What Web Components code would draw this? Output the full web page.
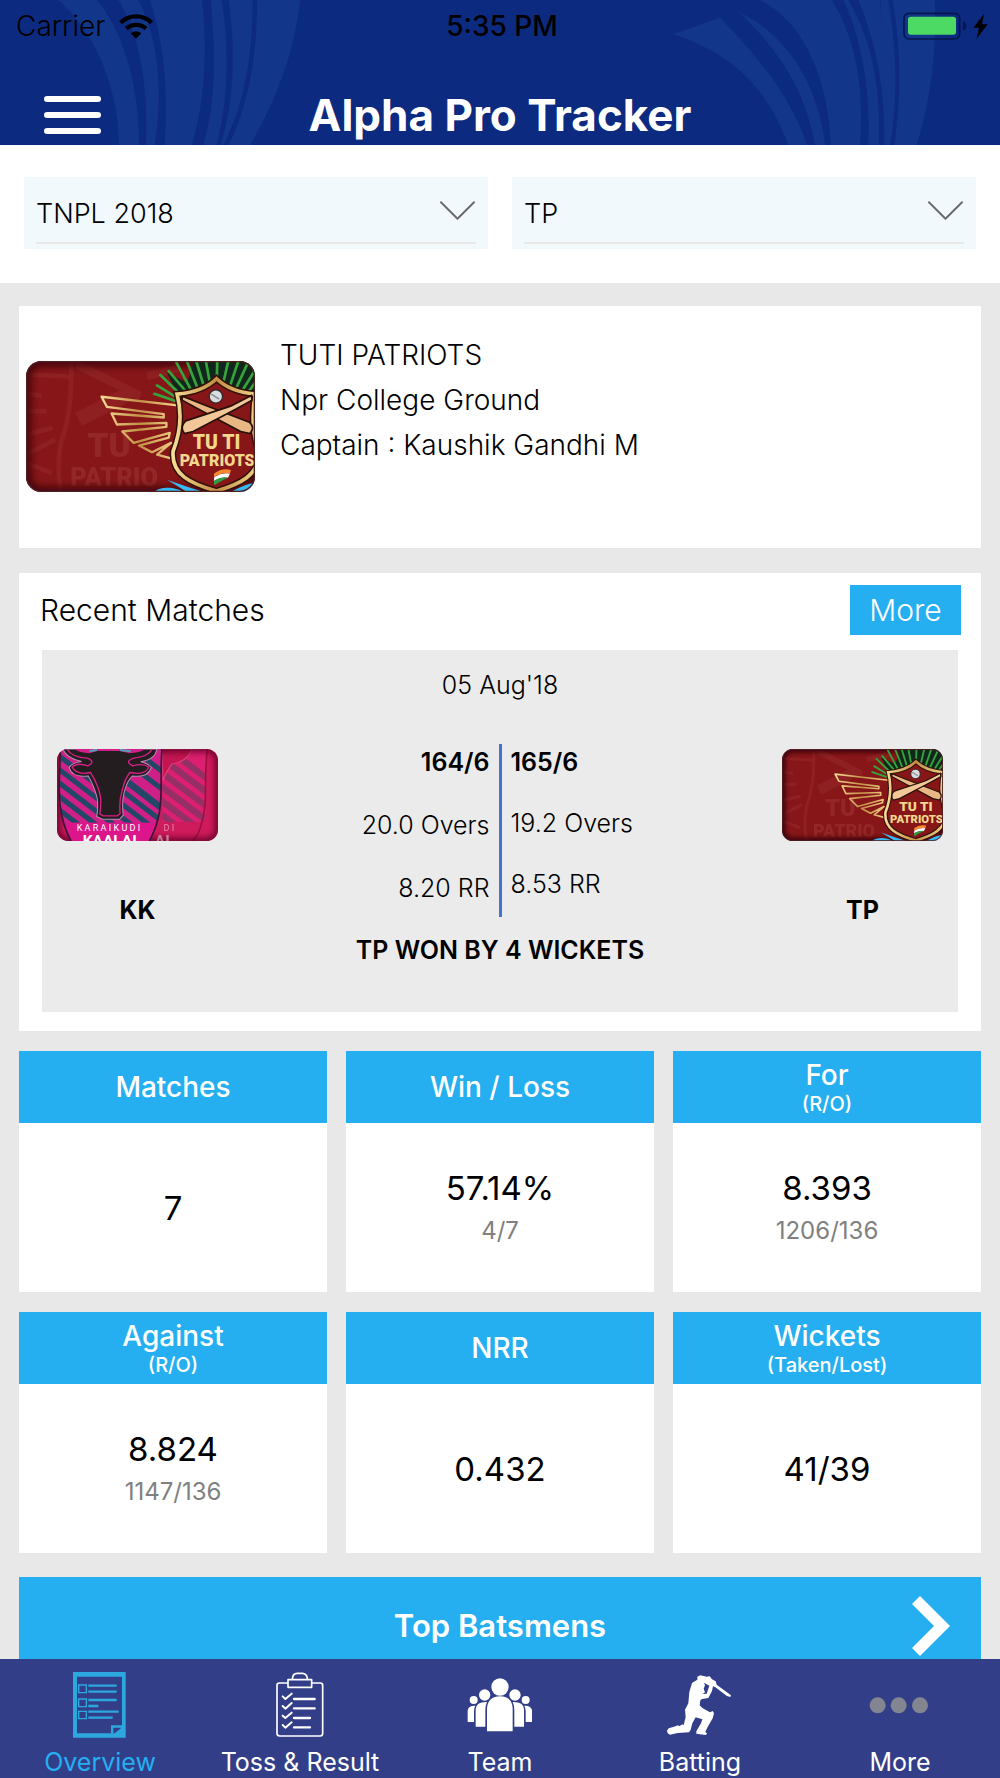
<!DOCTYPE html>
<html lang="en">
<head>
<meta charset="utf-8">
<meta name="viewport" content="width=device-width, initial-scale=1">
<title>Alpha Pro Tracker</title>
<style>
  :root {
    --sky: #25aff0;
    --navy: #0c2a80;
    --page: #e8e8e8;
    --gutter: 19px;
  }
  body {
    margin: 0;
    font-family: Inter, "Open Sans", sans-serif;
    color: #000;
    background: var(--page);
  }
</style>
</head>
<body>
<app-shell>
  <app-header slot="header" heading="Alpha Pro Tracker"></app-header>
  <filter-bar>
    <filter-select label="Tournament" value="TNPL 2018"></filter-select>
    <filter-select label="Team" value="TP"></filter-select>
  </filter-bar>
  <card-stack>
    <team-card>
      <team-logo team="tp" slot="logo"></team-logo>
      <span>TUTI PATRIOTS</span>
      <span>Npr College Ground</span>
      <span>Captain : Kaushik Gandhi M</span>
    </team-card>
    <recent-matches></recent-matches>
    <stat-grid>
      <stat-tile heading="Matches" value="7"></stat-tile>
      <stat-tile heading="Win / Loss" value="57.14%" detail="4/7"></stat-tile>
      <stat-tile heading="For" unit="(R/O)" value="8.393" detail="1206/136"></stat-tile>
      <stat-tile heading="Against" unit="(R/O)" value="8.824" detail="1147/136"></stat-tile>
      <stat-tile heading="NRR" value="0.432"></stat-tile>
      <stat-tile heading="Wickets" unit="(Taken/Lost)" value="41/39"></stat-tile>
    </stat-grid>
    <section-link>Top Batsmens</section-link>
  </card-stack>
  <tab-bar slot="footer">
    <tab-item icon="overview" active>Overview</tab-item>
    <tab-item icon="toss">Toss &amp; Result</tab-item>
    <tab-item icon="team">Team</tab-item>
    <tab-item icon="batting">Batting</tab-item>
    <tab-item icon="more">More</tab-item>
  </tab-bar>
</app-shell>

<script>
const define = (name, render) => customElements.define(name, class extends HTMLElement {
  connectedCallback() {
    if (this.shadowRoot) return;
    this.attachShadow({ mode: 'open' }).innerHTML = render(this);
  }
});

define('app-shell', () => `
  <style>
    :host { display: flex; flex-direction: column; height: 100vh; }
    main { flex: 1; min-height: 0; overflow-y: auto; scrollbar-width: none; }
  </style>
  <slot name="header"></slot>
  <main><slot></slot></main>
  <slot name="footer"></slot>`);

/* Header: status row, navigation row and the feather artwork behind both */
define('app-header', el => `
  <style>
    :host { display: block; position: relative; background: var(--navy); overflow: hidden; }
    .art { position: absolute; inset: 0; width: 100%; height: 100%; }
    .status, nav { position: relative; display: grid; grid-template-columns: 1fr auto 1fr; align-items: center; }
    .status { padding: 0 12px 0 16px; line-height: 52px; font-size: 28px; }
    .status div { display: flex; align-items: center; gap: 14px; }
    .status span { font-weight: 300; }
    .status strong { font-weight: 500; }
    .status .right { justify-content: flex-end; }
    nav { padding: 33px 44px 0; }
    h1 { margin: 0; font-size: 44px; line-height: 60px; font-weight: 700; color: #fff; }
    button { justify-self: start; display: grid; gap: 10px; width: 57px; padding: 0; border: 0; background: none; }
    button i { height: 6px; border-radius: 3px; background: #fff; }
  </style>
  <svg class="art" viewBox="0 0 3000 435" preserveAspectRatio="xMidYMid slice" fill="#12378a" aria-hidden="true">
    <path d="M175 0C260 70 355 230 357 435H417C418 270 375 100 290 0Z"/>
    <path d="M355 0C420 100 445 260 438 435H464C490 280 475 110 415 0Z"/>
    <path d="M450 0C490 120 506 270 494 435H575C620 290 620 130 606 0Z"/>
    <path d="M632 0C646 150 650 300 610 435H650C685 300 688 150 665 0Z"/>
    <path d="M686 0C707 150 704 300 662 435H670C740 300 757 150 758 0Z"/>
    <path d="M772 0C770 150 755 290 687 435H750C830 300 885 150 900 0Z"/>
    <g transform="translate(1500)">
      <path d="M520 103L660 53C780 175 870 290 922 435H865C800 260 695 160 520 103Z"/>
      <path d="M715 35C850 160 920 290 945 435H975C955 260 865 105 715 35Z"/>
      <path d="M780 0C920 70 985 250 993 435H1080C1093 270 1070 120 995 0Z"/>
      <path d="M1030 0C1090 130 1111 280 1105 435H1137C1142 270 1120 130 1045 0Z"/>
      <path d="M1075 0C1130 130 1157 280 1153 435H1170C1195 300 1189 140 1165 0H1142L1147 85L1140 0Z"/>
      <path d="M1178 0C1204 150 1204 300 1183 435H1250C1295 290 1309 150 1305 0Z"/>
    </g>
  </svg>
  <div class="status">
    <div><span>Carrier</span>
      <svg width="34" height="25" viewBox="362 35 102 75" aria-hidden="true">
        <g fill="none" stroke="#000" stroke-width="13"><path d="M367 61C392 36 435 36 460 61"/><path d="M384 79C400 64 427 64 443 79"/></g>
        <path d="M397 93Q413 80 429 93L413 109Z"/>
      </svg></div>
    <strong>5:35 PM</strong>
    <div class="right">
      <svg width="85" height="28" viewBox="1209 31 255 84" aria-hidden="true">
        <rect x="1212" y="35" width="167" height="77" rx="15" fill="none" stroke="#06174f" stroke-width="5"/>
        <rect x="1224" y="45" width="144" height="54" rx="8" fill="#4cd964"/>
        <path d="M1389 58Q1399 64 1399 73Q1399 82 1389 88Z" fill="#06174f"/>
        <path d="M1452 37L1420 78H1437L1430 111L1463 68H1446Z"/>
      </svg></div>
  </div>
  <nav>
    <button type="button" aria-label="Menu"><i></i><i></i><i></i></button>
    <h1>${el.getAttribute('heading')}</h1>
  </nav>`);

define('filter-bar', () => `
  <style>
    :host { display: grid; grid-template-columns: 1fr 1fr; gap: 24px; padding: 32px 24px 34px; background: #fff; }
  </style><slot></slot>`);

define('filter-select', el => `
  <style>
    :host { display: grid; padding: 0 12px 5px; background: #f1f9fd; }
    select, svg { grid-area: 1 / 1; }
    select { appearance: none; width: 100%; height: 67px; padding: 8px 48px 0 0; border: 0; border-bottom: 2px solid #e8e8e8;
      border-radius: 0; background: none; color: #000; font: 300 27px/36px Inter, sans-serif; }
    svg { justify-self: end; align-self: center; pointer-events: none; }
  </style>
  <select aria-label="${el.getAttribute('label')}"><option>${el.getAttribute('value')}</option></select>
  <svg width="37" height="22" viewBox="0 0 38 22" fill="none" stroke="#6b6b6b" stroke-width="2" stroke-linecap="round" stroke-linejoin="round" aria-hidden="true"><path d="M2 2L19 19L36 2"/></svg>`);

define('card-stack', () => `
  <style>:host { display: flex; flex-direction: column; padding: 23px var(--gutter) 0; }</style><slot></slot>`);

const tpLogo = `
<svg viewBox="78 65 685 392" role="img" aria-label="Tuti Patriots">
  <defs>
    <clipPath id="c"><rect x="78" y="65" width="685" height="392" rx="46"/></clipPath>
    <filter id="b" x="-20%" y="-20%" width="140%" height="140%"><feGaussianBlur stdDeviation="12"/></filter>
    <linearGradient id="g" x1="0" x2="1"><stop stop-color="#f6dc94"/><stop offset=".5" stop-color="#c28f46"/><stop offset="1" stop-color="#f4d58c"/></linearGradient>
  </defs>
  <g clip-path="url(#c)">
    <rect x="78" y="65" width="685" height="392" fill="#871619"/>
    <g stroke="#9b3532" stroke-width="14" fill="none" opacity=".35">
      <path d="M78 105L212 112M78 160L125 170M78 215H140M78 285L158 265M78 345L165 300M78 370L155 400"/>
      <path d="M212 65C218 170 202 260 182 310C172 370 172 410 184 457"/>
      <path d="M230 75L420 170" stroke-width="26"/>
      <path d="M235 240L390 160" stroke-width="44"/><path d="M440 110L540 85" stroke-width="24"/>
    </g>
    <g fill="#9b3532" opacity=".6" font-family="Roboto, sans-serif" font-weight="900">
      <text x="262" y="352" font-size="100">TU</text><text x="210" y="438" font-size="76">PATRIO</text>
    </g>
    <rect x="78" y="65" width="685" height="392" rx="46" fill="none" stroke="#330507" stroke-width="26" filter="url(#b)"/>
    <path d="M530 165L500 100L560 130L580 65H763V170L650 130Z" fill="#10281c"/>
    <g stroke="#37a33c" stroke-width="8" stroke-linecap="round">
      <path d="M535 188L462 163M535 178L470 138M540 165L480 107M560 160L505 95M574 156L528 70M592 148L560 68M610 140L588 68M628 130L616 66M649 115L650 66M668 130L683 66M688 140L713 66M706 148L738 78M724 155L760 98M740 162L763 130"/>
    </g>
    <g fill="none" stroke="url(#g)" stroke-width="7" stroke-linejoin="round">
      <path d="M532 198L304 172L320 202L490 224V234L334 222L350 255L498 250V262L366 276L400 310L508 280L505 294L416 318L455 338L512 310L470 345L512 356"/>
    </g>
    <path d="M462 457C480 438 530 442 548 457Z M500 420Q550 438 610 457H560Z M690 457Q740 430 763 430V457Z" fill="#37b9f2"/>
    <path d="M648 118C620 145 580 160 530 164C546 225 538 285 518 335C512 405 570 432 648 454C720 432 770 408 776 345C754 280 752 225 764 164C720 160 676 145 648 118Z" fill="#871619" stroke="#32100a" stroke-width="20"/>
    <path d="M648 118C620 145 580 160 530 164C546 225 538 285 518 335C512 405 570 432 648 454C720 432 770 408 776 345C754 280 752 225 764 164C720 160 676 145 648 118Z" fill="none" stroke="url(#g)" stroke-width="11"/>
    <g stroke="#271008" stroke-width="5">
      <path d="M546 170L610 196L746 248Q764 264 748 282L720 276L596 210L545 182Z" fill="#e9b784"/>
      <path d="M752 168L690 200L556 244Q536 262 552 282L578 276L708 208L754 182Z" fill="#f3c898"/>
    </g>
    <circle cx="646" cy="171" r="20" fill="#d9dde0" stroke="#35262a" stroke-width="4"/><path d="M632 164L656 179" stroke="#879098" stroke-width="5"/>
    <g fill="#f2d78d" font-family="Roboto, sans-serif" font-weight="900" text-anchor="middle">
      <text x="648" y="329" font-size="58">TU TI</text><text x="650" y="379" font-size="48">PATRIOTS</text>
    </g>
    <path d="M640 402Q665 384 691 391L688 402Q662 398 641 412Z" fill="#f58a2c"/><path d="M641 412Q664 398 688 402L682 414Q660 412 640 424Z" fill="#fff"/><path d="M640 424Q662 410 682 414Q660 424 641 437Z" fill="#2f9d46"/>
    <rect x="80" y="67" width="681" height="388" rx="44" fill="none" stroke="#50201f" stroke-width="4"/>
  </g>
</svg>`;

const kkLogo = `
<svg viewBox="53 57 479 274" role="img" aria-label="Karaikudi Kaalai">
  <defs>
    <clipPath id="c"><rect x="53" y="57" width="479" height="274" rx="34"/></clipPath>
    <clipPath id="s"><path d="M63 57H365C358 180 372 250 330 331H95C50 240 62 150 63 57Z"/></clipPath>
    <clipPath id="r"><path d="M366 57H500C490 160 502 230 490 275H366Z"/></clipPath>
    <filter id="b"><feGaussianBlur stdDeviation="9"/></filter>
  </defs>
  <g clip-path="url(#c)">
    <rect x="53" y="57" width="479" height="274" fill="#cf1a5c"/>
    <g clip-path="url(#r)"><rect x="360" y="57" width="150" height="220" fill="#dc1f70"/>
      <path d="M360 40L520 160M360 82L520 202M360 124L520 244M360 166L520 286M360 208L520 328M360 250L520 370" stroke="#943066" stroke-width="19"/></g>
    <path d="M366 57H455Q440 95 395 102Q380 120 368 150Z" fill="#c31551" stroke="#e4437e" stroke-width="3"/>
    <path d="M500 57C488 170 505 210 480 290Q470 320 455 331" fill="none" stroke="#a0103f" stroke-width="5"/>
    <rect x="53" y="57" width="479" height="274" rx="34" fill="none" stroke="#620025" stroke-width="18" filter="url(#b)"/>
    <g clip-path="url(#s)">
      <rect x="53" y="57" width="320" height="274" fill="#cf2088"/>
      <path d="M40 23L380 283M40 63L380 323M40 103L380 363M40 143L380 403M40 183L380 443M40 223L380 483M130 50L400 257M200 50L400 203M270 50L400 150M30 -20L380 248" stroke="#234766" stroke-width="15"/>
      <rect x="53" y="276" width="320" height="60" fill="#dc168a"/>
    </g>
    <path d="M365 57C358 180 376 240 328 331M63 57C62 150 45 240 95 331" fill="none" stroke="#3a1535" stroke-width="5"/>
    <path d="M70 57Q82 85 126 94Q98 98 89 112Q98 144 146 137Q165 170 173 205Q176 235 171 258L188 266H239L250 254Q245 215 253 185Q262 150 278 137Q322 144 334 112Q324 100 302 95Q346 88 350 57Z" fill="#231d20" stroke="#b98fb4" stroke-width="3"/>
    <path d="M82 57Q98 83 143 84Q170 95 145 107Q112 96 98 111Q112 136 153 127Q177 165 183 203Q184 235 180 250L190 256H232L241 249Q237 210 247 180Q255 145 270 127Q315 136 326 111Q310 98 278 107Q252 94 282 84Q324 80 337 57" fill="none" stroke="#d81f87" stroke-width="4"/>
    <path d="M104 57Q120 68 150 70L172 63H240L268 70Q300 68 316 57Z" fill="#cf2088"/>
    <path d="M150 63L172 60M240 60L272 64" stroke="#53a4bb" stroke-width="6"/>
    <g fill="#fff" font-family="Roboto, sans-serif" font-weight="400" text-anchor="middle">
      <text x="206" y="301" font-size="27">K A R A I K U D I</text>
      <text x="210" y="346" font-size="46" font-weight="700">KAALAI</text>
      <text x="386" y="301" font-size="27" opacity=".45">D I</text><text x="366" y="346" font-size="46" font-weight="700" opacity=".45">AI</text>
    </g>
  </g>
</svg>`;

define('team-logo', el => `
  <style>:host { display: block; } svg { display: block; width: 100%; height: auto; }</style>
  ${el.getAttribute('team') === 'tp' ? tpLogo : kkLogo}`);

define('team-card', () => `
  <style>
    :host { display: grid; grid-template-columns: 229px 1fr; gap: 25px; min-height: 242px; padding: 0 7px; box-sizing: border-box; background: #fff; align-items: center; }
    .lines { align-self: start; display: flex; flex-direction: column; padding-top: 27px; font-size: 28px; line-height: 45px; font-weight: 300; }
  </style>
  <slot name="logo"></slot>
  <div class="lines"><slot></slot></div>`);

define('recent-matches', () => `
  <style>
    :host { display: block; margin-top: 25px; padding: 12px 21px 19px; background: #fff; }
    header { display: flex; justify-content: space-between; align-items: center; margin-right: -1px; }
    h2 { margin: 0; font-size: 30px; font-weight: 300; line-height: 50px; }
    button { width: 111px; height: 50px; padding: 0; border: 0; background: var(--sky); color: #fff; font: 300 30px/50px Inter, sans-serif; }
    article { margin: 15px 2px 0; height: 362px; background: #ebebeb; font-size: 25px; font-weight: 300; text-align: center; }
    time { display: block; padding-top: 18px; line-height: 34px; }
    .teams { display: grid; grid-template-columns: 161px 1fr 161px; padding: 0 15px; margin-top: 42px; }
    .team { display: grid; align-content: start; gap: 52px; padding-top: 5px; font-weight: 700; line-height: 34px; }
    .scores { display: grid; grid-template-columns: 1fr 3px 1fr; column-gap: 9px; height: 173px; line-height: 36px; }
    .rule { background: #3f74cf; }
    dl { margin: 0; display: flex; flex-direction: column; text-align: left; gap: 25px; }
    dl.home { text-align: right; gap: 27px; }
    dd { margin: 0; }
    b { font-weight: 600; }
    .result { margin: 6px 0 0; line-height: 34px; font-weight: 600; }
  </style>
  <header><h2>Recent Matches</h2><button type="button">More</button></header>
  <article>
    <time datetime="2018-08-05">05 Aug'18</time>
    <div class="teams">
      <div class="team"><team-logo team="kk"></team-logo><span>KK</span></div>
      <div class="scores">
        <dl class="home"><dd><b>164/6</b></dd><dd>20.0 Overs</dd><dd>8.20 RR</dd></dl>
        <div class="rule"></div>
        <dl><dd><b>165/6</b></dd><dd>19.2 Overs</dd><dd>8.53 RR</dd></dl>
      </div>
      <div class="team"><team-logo team="tp"></team-logo><span>TP</span></div>
    </div>
    <p class="result">TP WON BY 4 WICKETS</p>
  </article>`);

define('stat-grid', () => `
  <style>:host { display: grid; grid-template-columns: repeat(3, 1fr); gap: 20px 19px; margin-top: 20px; }</style><slot></slot>`);

define('stat-tile', el => {
  const part = (name, tag) => el.hasAttribute(name) ? `<${tag}>${el.getAttribute(name)}</${tag}>` : '';
  return `
  <style>
    :host { display: flex; flex-direction: column; height: 241px; background: #fff; text-align: center; }
    header { display: flex; flex-direction: column; justify-content: center; height: 72px; background: var(--sky); color: #fff; }
    h3 { margin: 0; font-size: 28px; line-height: 34px; font-weight: 500; }
    small { font-size: 20px; line-height: 24px; font-weight: 500; }
    .body { flex: 1; display: flex; flex-direction: column; justify-content: center; }
    strong { font-size: 33px; line-height: 46px; font-weight: 400; }
    span { font-size: 24px; line-height: 40px; color: #808080; }
  </style>
  <header>${part('heading', 'h3')}${part('unit', 'small')}</header>
  <div class="body">${part('value', 'strong')}${part('detail', 'span')}</div>`;
});

define('section-link', () => `
  <style>
    :host { display: block; margin-top: 24px; }
    a { display: grid; grid-template-columns: 1fr auto 1fr; align-items: center; height: 97px; padding: 0 31px; background: var(--sky); color: #fff; text-decoration: none; font-size: 31px; font-weight: 600; }
    span { grid-column: 2; }
    svg { justify-self: end; }
  </style>
  <a href="#batsmen"><span><slot></slot></span>
    <svg width="38" height="60" viewBox="0 0 38 60" fill="#fff" aria-hidden="true"><path d="M8 0L38 30L8 60L0 52L22 30L0 8Z"/></svg></a>`);

define('tab-bar', () => `
  <style>:host { display: grid; grid-template-columns: repeat(5, 1fr); flex: none; background: #323f88; }</style><slot></slot>`);

/* Each icon: origin of its 264 x 204 view box, then its shapes */
const icons = {
  overview: ['168 60', `
    <path fill="#2ca8df" fill-rule="evenodd" d="M219 66H377V263H219ZM231 80V250H366V80Z"/>
    <path fill="#2ca8df" d="M333 226H368V233H340V250H333ZM342 252L366 232V252Z"/>
    <g fill="none" stroke="#2ca8df" stroke-width="4"><path d="M236 105H259V128H236ZM236 147H259V170H236ZM236 184H259V206H236Z"/>
    <path stroke-width="7" d="M265 107H350M265 125H350M265 150H350M265 168H295M265 185H356M265 203H338"/></g>`],
  toss: ['768 60', `
    <g fill="none" stroke="#fff" stroke-width="5" stroke-linejoin="round" stroke-linecap="round">
    <path d="M862 99H838Q831 99 831 106V250Q831 258 839 258H961Q968 258 968 250V106Q968 99 961 99H938"/>
    <path d="M864 89H935V112H864ZM877 87Q878 70 892 70H908Q922 72 922 87"/>
    <path stroke-width="7" d="M882 147H944M882 175H944M882 204H930M882 232H930"/>
    <path stroke-width="6" d="M848 139L856 147L875 131M848 168L856 176L875 159M848 197L856 204L875 188M848 225L856 233L875 217"/></g>`],
  team: ['1368 60', `<g fill="#fff">
    <circle cx="1500" cy="111" r="26"/><path d="M1461 244V174Q1464 140 1500 139Q1536 140 1538 174V244Z"/>
    <circle cx="1454" cy="135" r="17"/><path d="M1427 230V178Q1428 155 1461 156Q1456 165 1456 182V230Z"/>
    <circle cx="1545" cy="135" r="17"/><path d="M1572 230V178Q1571 155 1538 156Q1543 165 1543 182V230Z"/>
    <circle cx="1421" cy="150" r="12"/><path d="M1403 216V181Q1405 166 1426 167Q1422 173 1422 184V216Z"/>
    <circle cx="1577" cy="150" r="12"/><path d="M1596 216V181Q1594 166 1573 167Q1577 173 1577 184V216Z"/></g>`],
  batting: ['468 330', `
    <path fill="#fff" d="M592 350L601 346L620 350L629 349L636 358L647 364L650 374L693 406L691 411L681 408L646 382L639 379L636 393L625 414L606 417L601 421L599 436L607 444L630 457L638 453L642 460L638 475L623 501L616 515L621 521L617 525L589 521V514L603 490L607 478L587 472L577 490L572 509L567 517L533 519L510 524L503 520L501 512L506 505L522 500L534 496L537 499L548 493L551 496L557 471L555 449L565 430L568 396L576 369L592 359ZM612 368L615 376L611 386L615 397L608 402L620 401L628 377Z"/>`],
  more: ['1068 330', `<g fill="#838590"><circle cx="1133" cy="436" r="24"/><circle cx="1196" cy="436" r="24"/><circle cx="1260" cy="436" r="24"/></g>`],
};

define('tab-item', el => {
  const [origin, art] = icons[el.getAttribute('icon')];
  return `
  <style>
    :host { display: block; color: #fff; }
    :host([active]) { color: var(--sky); }
    a { display: flex; flex-direction: column; align-items: center; gap: 10px; padding: 11px 0 2px; color: inherit; text-decoration: none; font-size: 25px; line-height: 28px; }
  </style>
  <a href="#${el.getAttribute('icon')}">
    <svg width="88" height="68" viewBox="${origin} 264 204" aria-hidden="true">${art}</svg>
    <span><slot></slot></span></a>`;
});
</script>
</body>
</html>
